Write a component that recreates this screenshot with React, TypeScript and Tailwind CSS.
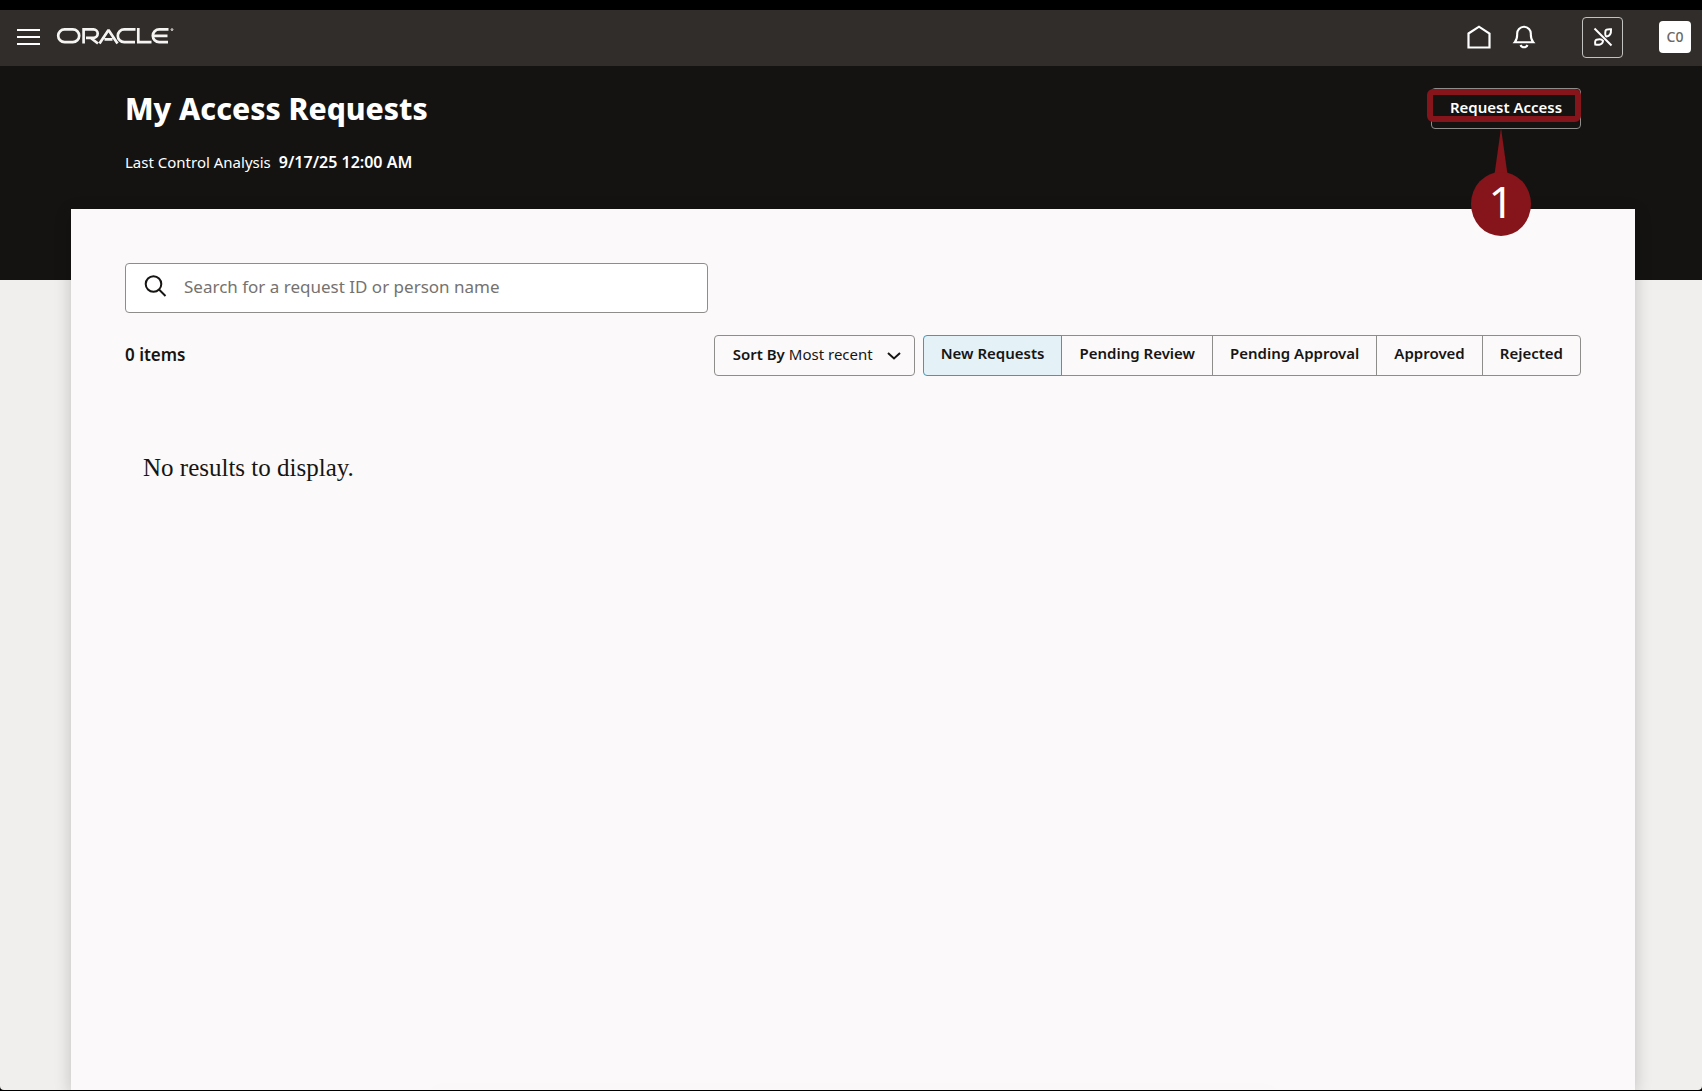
import { useState } from "react";

const filters = ["New Requests", "Pending Review", "Pending Approval", "Approved", "Rejected"];

function OracleLogo() {
  return (
    <svg width="118" height="18" viewBox="0 0 118 18" fill="none" stroke="#f5f4f2" strokeWidth="2.7" role="img" aria-label="Oracle">
      <rect x="2.2" y="2.4" width="21" height="12.8" rx="6.4" />
      <path d="M27.600 16.500V2.400H37.500a4.200 4.200 0 0 1 0 8.400H30M34.500 10.800l7.500 5.700" />
      <path d="M43.500 16.500 52.500 3 61.500 16.500M48.500 12.300h8" strokeLinejoin="bevel" />
      <path d="M79.500 2.400H68.200a6.400 6.400 0 0 0 0 12.800H79" />
      <path d="M82.300 1v14.200H95.500" />
      <path d="M112.500 2.400h-9.300a6.400 6.400 0 0 0 0 12.800H112M97.500 8.800h14" />
      <circle cx="116" cy="2.600" r="0.900" strokeWidth="1" />
    </svg>
  );
}

function TopBar() {
  return (
    <header className="flex h-14 items-center justify-between bg-[#312d2a] pr-[11px] pb-0.5 pl-4 text-white">
      <div className="flex items-center gap-4">
        <button type="button" aria-label="Navigation menu" className="flex">
          <svg width="24" height="18" viewBox="0 0 24 18" stroke="currentColor" strokeWidth="2.2">
            <path d="M1 2h23M1 9h23M1 16h23" />
          </svg>
        </button>
        <a href="#home" className="flex pb-0.5">
          <OracleLogo />
        </a>
      </div>
      <div className="flex items-center">
        <a href="#home" aria-label="Home" className="flex">
          <svg width="24" height="24" viewBox="0 0 24 24" fill="none" stroke="currentColor" strokeWidth="2.2">
            <path d="M1.500 8.500 12 1.700l10.500 6.800V22.500h-21z" />
          </svg>
        </a>
        <button type="button" aria-label="Notifications" className="ml-[21px] flex">
          <svg width="24" height="24" viewBox="0 0 24 24" fill="none" stroke="currentColor" strokeWidth="2.1">
            <path d="M2.800 17.200c1.700-2 2.400-4 2.400-8A6.800 6.800 0 0 1 12 1.800a6.800 6.800 0 0 1 6.800 7.400c0 4 .7 6 2.400 8z" />
            <path d="M8.500 20c1.200 2.900 5.800 2.900 7 0" />
          </svg>
        </button>
        <button type="button" aria-label="Call disconnected" className="ml-[46px] flex size-[41px] items-center justify-center rounded border border-[#c4c2c0]">
          <svg width="20" height="20" viewBox="0 0 20 20" fill="none" stroke="currentColor" strokeWidth="2">
            <path d="M1.500 1.500 18.500 18.500" />
            <path d="M13.500 9.500C11.500 8.500 12.200 5.500 12.600 3.500C12.900 2.200 14 2 18 2.200C18.200 5.500 17.500 9 13.500 9.500z" />
            <path d="M10 13.800C8.500 11.800 5.500 12.300 3.500 12.800C2.200 13.200 1.800 14.500 2.300 17.600C6 18.300 9.800 17.500 10 13.800z" />
          </svg>
        </button>
        <button type="button" className="ml-9 size-8 rounded bg-white text-sm font-medium text-[#6b6866]">
          C0
        </button>
      </div>
    </header>
  );
}

function Callout() {
  return (
    <div className="pointer-events-none absolute top-px -left-1 z-10">
      <div className="h-[33px] w-[154px] rounded-md border-6 border-[#85151a]" />
      <svg className="absolute top-[39px] left-11" width="60" height="108" viewBox="0 0 60 108" aria-hidden="true">
        <path d="M30 0 37 50H23z" fill="#85151a" />
        <ellipse cx="30" cy="76" rx="30" ry="32" fill="#85151a" />
      </svg>
      <span className="absolute top-[82px] left-11 w-[60px] text-center text-[44px] leading-[60px] text-white">1</span>
    </div>
  );
}

export default function App() {
  const [active, setActive] = useState(filters[0]);
  return (
    <div className="flex min-h-screen flex-col border-t-10 border-b border-black bg-black font-['Noto_Sans',sans-serif] text-[#161513]">
      <div className="flex grow flex-col overflow-hidden rounded-b-sm bg-[#f0efed]">
        <TopBar />
        <div className="flex grow flex-col bg-linear-to-b from-[#141311] from-[214px] to-transparent to-[214px] pr-[67px] pl-[71px]">
          <div className="flex h-[143px] items-start justify-between px-[54px] pt-[22px] text-white">
            <div>
              <h1 className="text-[30px] leading-[42px] font-extrabold">My Access Requests</h1>
              <p className="mt-5 flex gap-2 text-[15px] leading-6">
                Last Control Analysis <strong className="text-base font-semibold">9/17/25 12:00 AM</strong>
              </p>
            </div>
            <div className="relative">
              <button type="button" className="h-[41px] w-[150px] rounded border border-[#8f8d8b] pb-0.5 text-[15px] font-semibold">
                Request Access
              </button>
              <Callout />
            </div>
          </div>
          <main className="flex grow flex-col bg-[#fbf9fa] px-[54px] pt-[54px] shadow-[0_4px_16px_rgba(0,0,0,0.2)]">
            <label className="flex h-[50px] w-[583px] items-center gap-4 rounded border border-[#8f8d8b] bg-white px-[18px] pb-0.5">
              <svg width="24" height="24" viewBox="0 0 24 24" fill="none" stroke="currentColor" strokeWidth="2" aria-hidden="true">
                <circle cx="9.500" cy="9" r="7.800" />
                <path d="m15 14.500 6.500 6.500" />
              </svg>
              <input
                type="text"
                aria-label="Search for a request ID or person name"
                placeholder="Search for a request ID or person name"
                className="grow text-[17px] outline-none placeholder:text-[#75726f]"
              />
            </label>
            <div className="mt-[22px] flex items-center justify-between">
              <p className="pb-0.5 text-[17px] font-semibold">0 items</p>
              <div className="flex gap-2">
                <label className="relative flex h-[41px] w-[201px] items-center gap-1 rounded border border-[#8f8d8b] pb-0.5 pl-[18px] text-[15px]">
                  <span className="font-semibold">Sort By</span>
                  <select className="grow appearance-none bg-transparent outline-none">
                    <option>Most recent</option>
                  </select>
                  <svg className="pointer-events-none absolute top-3 right-3" width="16" height="16" viewBox="0 0 16 16" fill="none" stroke="currentColor" strokeWidth="2" aria-hidden="true">
                    <path d="m2 5 6 5.500L14 5" />
                  </svg>
                </label>
                <div role="group" aria-label="Request status" className="flex">
                  {filters.map((name) => (
                    <button
                      key={name}
                      type="button"
                      aria-pressed={active === name}
                      onClick={() => setActive(name)}
                      className="-ml-px h-[41px] border border-[#8f8d8b] px-[17px] pb-1 text-[15px] font-semibold first:ml-0 first:rounded-l last:rounded-r aria-pressed:relative aria-pressed:border-[#4a97b0] aria-pressed:bg-[#e4f1f7]"
                    >
                      {name}
                    </button>
                  ))}
                </div>
              </div>
            </div>
            <p className="mt-[74px] px-[18px] font-['Georgia','Liberation_Serif',serif] text-[25px] leading-9">No results to display.</p>
            <div className="mx-auto mt-auto h-px w-3/5 shadow-[0_0_24px_rgba(0,0,0,0.12)]" />
          </main>
        </div>
      </div>
    </div>
  );
}
